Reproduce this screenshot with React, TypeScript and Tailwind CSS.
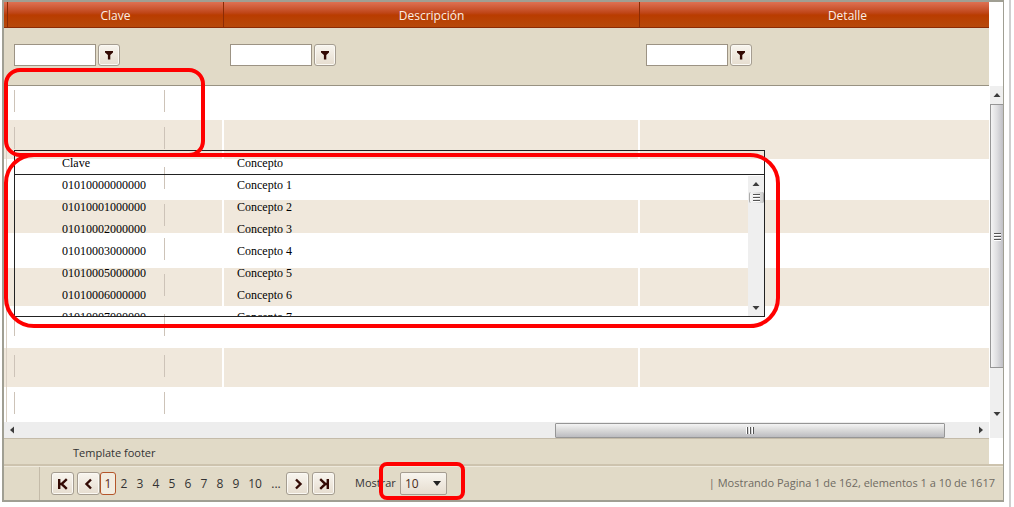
import React, { useState } from 'react';
import clsx from 'clsx';

const columns = [
  { id: 'clave', label: 'Clave' },
  { id: 'descripcion', label: 'Descripción' },
  { id: 'detalle', label: 'Detalle' },
];

// the grid rows come without data, only their heights differ
const rowHeights = ['h-[34px]', 'h-[39px]', 'h-[41px]', 'h-[33px]', 'h-[35px]', 'h-[38px]', 'h-[42px]', 'h-[39px]', 'h-[35px]'];

const conceptos = [
  { clave: '01010000000000', concepto: 'Concepto 1' },
  { clave: '01010001000000', concepto: 'Concepto 2' },
  { clave: '01010002000000', concepto: 'Concepto 3' },
  { clave: '01010003000000', concepto: 'Concepto 4' },
  { clave: '01010005000000', concepto: 'Concepto 5' },
  { clave: '01010006000000', concepto: 'Concepto 6' },
  { clave: '01010007000000', concepto: 'Concepto 7' },
];

const pages = [1, 2, 3, 4, 5, 6, 7, 8, 9, 10];

const buttonStyle =
  'flex items-center justify-center rounded-[3px] border border-[#a59d91] bg-linear-to-b from-[#f8f5ef] to-[#e6ddcf] shadow-[inset_0_0_0_1px_#fbf9f4]';

const Arrow = ({ direction }: { direction: 'up' | 'down' | 'left' | 'right' }) => (
  <svg
    viewBox="0 0 8 8"
    className={clsx(
      'h-2 w-2 shrink-0',
      direction === 'down' && 'rotate-180',
      direction === 'left' && '-rotate-90',
      direction === 'right' && 'rotate-90',
    )}
  >
    <path d="M4 2 L7.5 6 H0.5 Z" fill="#3c3c3c" />
  </svg>
);

const Grip = ({ vertical = false }: { vertical?: boolean }) => (
  <svg viewBox="0 0 9 9" className={clsx('h-[9px] w-[9px] shrink-0', vertical && 'rotate-90')}>
    <path d="M1 1.5h7M1 4.5h7M1 7.5h7" stroke="#555" />
    <path d="M1 2.5h7M1 5.5h7M1 8.5h7" stroke="#fff" />
  </svg>
);

const FilterButton = ({ label }: { label: string }) => (
  <button type="button" aria-label={label} className={clsx(buttonStyle, 'h-[22px] w-[22px]')}>
    <svg viewBox="0 0 10 10" className="h-[10px] w-[10px]">
      <path d="M1 1h8v1.5L6.3 5v4.5H3.9V5L1 2.5Z" fill="#330a04" />
    </svg>
  </button>
);

const PagerButton = ({ label, path, onClick }: { label: string; path: string; onClick: () => void }) => (
  <button type="button" aria-label={label} onClick={onClick} className={clsx(buttonStyle, 'h-[23px] w-[23px]')}>
    <svg viewBox="0 0 12 12" className="h-3 w-3" fill="none" stroke="#330a04" strokeWidth="2.4">
      <path d={path} />
    </svg>
  </button>
);

const ConceptosPopup = () => (
  <div className="absolute left-[10px] top-[148px] h-[167px] w-[751px] overflow-hidden border border-[#222]">
    <table className="w-full table-fixed border-separate border-spacing-0 text-left font-['Liberation_Serif',serif] text-[12px] leading-[20px] text-black">
      <thead>
        <tr className="h-6">
          <th className="w-[222px] border-b border-[#222] pl-[47px] font-normal">Clave</th>
          <th className="border-b border-[#222] font-normal">Concepto</th>
        </tr>
      </thead>
      <tbody>
        {conceptos.map((item) => (
          <tr key={item.clave} className="h-[22px] align-top">
            <td className="pl-[47px]">{item.clave}</td>
            <td>{item.concepto}</td>
          </tr>
        ))}
      </tbody>
    </table>
    <div className="absolute bottom-0 right-0 top-[25px] flex w-4 flex-col items-center bg-[#efefef] py-1">
      <Arrow direction="up" />
      <div className="mt-1 flex h-[11px] w-[15px] items-center justify-center rounded-[2px] border-x border-[#aaa] bg-linear-to-r from-[#f6f6f6] to-[#cfcfcf]">
        <Grip />
      </div>
      <div className="flex-1" />
      <Arrow direction="down" />
    </div>
  </div>
);

const App = () => {
  const [page, setPage] = useState(1);

  return (
    <div className="flex min-h-screen bg-white pl-[2px] pr-[3px] font-['Open_Sans',sans-serif] text-[11px] text-[#333]">
      <div className="relative flex-1 self-start border-2 border-r border-[#a09f93]">
        <div className="flex">
          <div className="relative min-w-0 flex-1">
            <table className="w-full table-fixed border-separate border-spacing-0">
              <colgroup>
                <col className="w-[3px]" />
                <col className="w-[216px]" />
                <col className="w-[416px]" />
                <col />
              </colgroup>
              <thead>
                <tr className="h-[26px] bg-linear-to-b from-[#de7152] via-[#b93c00] to-[#b64a0c] text-[12px] text-[#fbeee6]">
                  <td className="border-b border-[#8c2b05]" />
                  {columns.map((column) => (
                    <th
                      key={column.id}
                      className={clsx(
                        'border-b border-l border-[#8c2b05] p-0 pt-[2px] font-normal leading-4',
                        column.id === 'detalle' && 'pl-[66px]',
                      )}
                    >
                      {column.label}
                    </th>
                  ))}
                </tr>
                <tr className="h-[58px] bg-[#e1dac7]">
                  <td className="border-b border-[#989282]" />
                  {columns.map((column) => (
                    <td key={column.id} className="border-b border-[#989282] pb-1 pl-[7px]">
                      <div className="flex gap-[2px]">
                        <input
                          type="text"
                          aria-label={`Filtro ${column.label}`}
                          className="h-[22px] w-[82px] border border-[#9c9384] bg-white px-1"
                        />
                        <FilterButton label={`Filtrar ${column.label}`} />
                      </div>
                    </td>
                  ))}
                </tr>
              </thead>
              <tbody>
                {rowHeights.map((height, i) => (
                  <tr key={i} className={clsx(height, i % 2 ? 'bg-[#f0e8dc]' : 'bg-white')}>
                    <td className="border-r border-[#d9cfc3] p-0" />
                    <td className="border-r border-white p-0 pb-1 pl-[7px]">
                      <div className="h-[22px] w-[151px] border-x border-[#cdc3b8]" />
                    </td>
                    <td className="border-x border-white p-0" />
                    <td className="border-l border-white p-0" />
                  </tr>
                ))}
              </tbody>
            </table>

            <div className="flex h-4 items-center bg-[#ededed] px-1">
              <Arrow direction="left" />
              <div className="flex-1" />
              <div className="mr-8 flex h-[15px] w-[390px] items-center justify-center rounded-[1px] border border-[#969696] bg-linear-to-b from-[#f4f4f4] via-[#d8d8d8] to-[#bcbcc0]">
                <Grip vertical />
              </div>
              <Arrow direction="right" />
            </div>

            <div className="flex h-[26px] items-center border-t border-[#c4bba9] bg-[#e1dac7] pl-[69px] pt-[2px] leading-4">
              Template footer
            </div>

            <ConceptosPopup />
          </div>

          <div className="w-[14px] pb-[26px] pl-px pt-[84px]">
            <div className="flex h-full flex-col items-center bg-[#efefef] pb-5 pt-[5px]">
              <Arrow direction="up" />
              <div className="mt-[5px] flex h-[264px] w-full items-center justify-center border border-r-0 border-[#969696] bg-linear-to-r from-[#f4f4f4] via-[#dedee0] to-[#c0c0c6]">
                <Grip />
              </div>
              <div className="flex-1" />
              <Arrow direction="down" />
            </div>
          </div>
        </div>

        <div className="flex h-[36px] items-center border-t-2 border-[#cdc3ae] bg-[#e1dac7] pt-px shadow-[inset_0_1px_0_#eee9dc]">
          <div className="mr-[11px] h-full w-9 border-r border-[#c4bba9]" />
          <nav aria-label="Paginación" className="flex items-center text-[12px]">
            <div className="flex gap-[3px]">
              <PagerButton label="Primera página" path="M2.2 1v10M9.8 1.2 4.6 6l5.2 4.8M2.3 6h3" onClick={() => setPage(1)} />
              <PagerButton label="Página anterior" path="M8 1.5 3.5 6 8 10.5" onClick={() => setPage(Math.max(1, page - 1))} />
            </div>
            {pages.map((n) => (
              <button
                key={n}
                type="button"
                onClick={() => setPage(n)}
                className={clsx(
                  'h-[23px] text-center',
                  n === 10 ? 'w-[22px]' : 'w-4',
                  n === page && 'rounded-[3px] border border-[#b4562b] bg-[#f2ece0] text-[#5a2a18]',
                )}
              >
                {n}
              </button>
            ))}
            <button type="button" className="w-5 text-center">...</button>
            <div className="flex gap-[3px]">
              <PagerButton label="Página siguiente" path="M4 1.5 8.5 6 4 10.5" onClick={() => setPage(Math.min(162, page + 1))} />
              <PagerButton label="Última página" path="M9.8 1v10M2.2 1.2 7.4 6l-5.2 4.8M9.7 6h-3" onClick={() => setPage(162)} />
            </div>
          </nav>
          <label htmlFor="mostrar" className="ml-5 w-[45px]">Mostrar</label>
          <div className="relative">
            <select
              id="mostrar"
              defaultValue="10"
              className="h-[23px] w-[47px] appearance-none rounded-[2px] border border-[#a59d91] bg-linear-to-b from-[#f8f5ef] to-[#e6ddcf] pl-1 text-[12px] text-[#4a2c20]"
            >
              <option>10</option>
              <option>20</option>
              <option>50</option>
            </select>
            <svg viewBox="0 0 8 5" className="pointer-events-none absolute right-[6px] top-[9px] h-[5px] w-2">
              <path d="M0 0h8L4 5Z" fill="#222" />
            </svg>
          </div>
          <p className="ml-auto pr-2 text-[#6f6a62]">| Mostrando Pagina 1 de 162, elementos 1 a 10 de 1617</p>
        </div>

        {/* marcas rojas */}
        <div className="pointer-events-none absolute left-0 top-[66px] h-[89px] w-[201px] rounded-2xl border-4 border-[#ff0000]" />
        <div className="pointer-events-none absolute left-0 top-[151px] h-[175px] w-[776px] rounded-[30px] border-4 border-[#ff0000]" />
        <div className="pointer-events-none absolute left-[375px] top-[460px] h-[38px] w-[86px] rounded-lg border-4 border-[#ff0000]" />
      </div>
      <div className="ml-[5px] w-[2px] bg-[#cfcfcf]" />
    </div>
  );
};

export default App;
